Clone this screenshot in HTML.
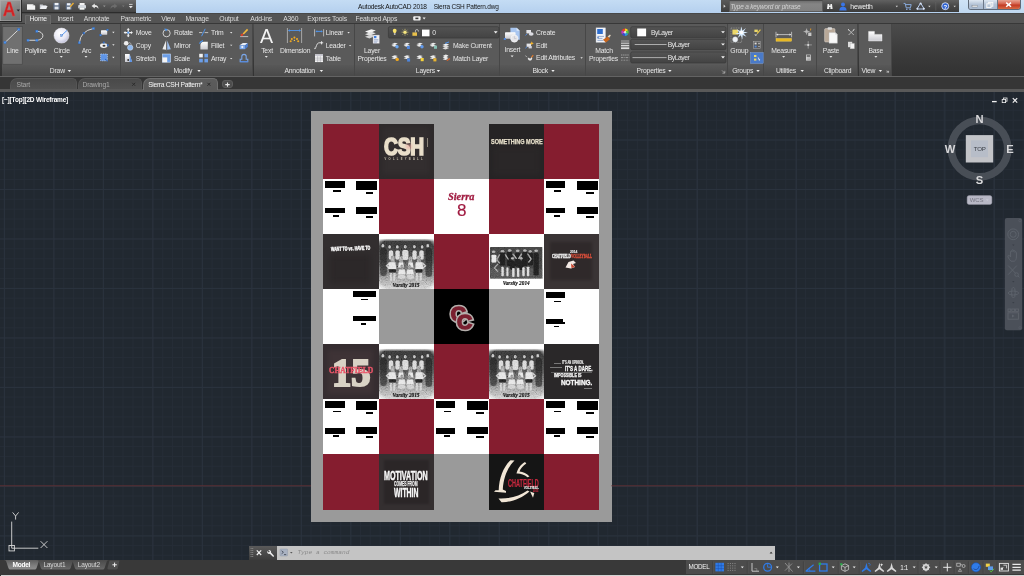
<!DOCTYPE html>
<html lang="en">
<head>
<meta charset="utf-8">
<title>Autodesk AutoCAD 2018 - Sierra CSH Pattern.dwg</title>
<style>
*{box-sizing:border-box;margin:0;padding:0}
html,body{width:1024px;height:576px;overflow:hidden;background:#212830}
body{font-family:"Liberation Sans",sans-serif;font-size:7px;color:#e6e6e6;position:relative}
#app{position:absolute;left:0;top:0;width:1024px;height:576px;overflow:hidden}
.abs{position:absolute}
.t{position:absolute;white-space:nowrap;line-height:8px;font-size:7px;color:#e4e4e4}
.c{text-align:center}
svg{position:absolute;overflow:visible}
/* ---------- title bar ---------- */
#titlebar{position:absolute;left:0;top:0;width:1024px;height:13px;background:linear-gradient(#c4dcf4,#b5d0ee)}
#qat{position:absolute;left:21.4px;top:0;width:114.2px;height:12.6px;background:linear-gradient(#6c6c6c,#555 45%,#454545);border-bottom:1px solid #2c2c2c}
#abtn{position:absolute;left:0;top:0;width:21.6px;height:21.6px;background:linear-gradient(160deg,#a2a2a2,#868686 45%,#6e6e6e);border:1px solid #2a2a2a;border-left:0;border-top:0;box-shadow:inset 0 0 0 .6px #b0b0b0}
#srch0{position:absolute;left:720.6px;top:0;width:8px;height:12.4px;background:linear-gradient(#5a5a5a,#3d3d3d)}
#search{position:absolute;left:728.5px;top:0;width:94.5px;height:12.4px;background:linear-gradient(#6e6e6e,#858585 30%,#808080);border:1px solid #5c5c5c;border-top-color:#4a4a4a}
#userbar{position:absolute;left:823px;top:0;width:136px;height:12.4px;background:linear-gradient(#616161,#4a4a4a 45%,#3c3c3c)}
#winbtns{position:absolute;left:959px;top:0;width:65px;height:13px;background:linear-gradient(#cfe3f6,#c0d8f0)}
#wb{position:absolute;left:9px;top:0;width:53.4px;height:9.6px;border:1px solid #5f6a78;border-top:0;border-radius:0 0 3px 3px;overflow:hidden;background:#c9d6e6}
#wb i{position:absolute;top:0;height:9px;display:block}
#wmin{left:0;width:14.5px;background:linear-gradient(#dfe8f2,#b4c3d6 50%,#a9bad0);border-right:1px solid #6d7888}
#wres{left:14.5px;width:14px;background:linear-gradient(#dfe8f2,#b4c3d6 50%,#a9bad0);border-right:1px solid #6d7888}
#wcls{left:28.5px;width:24px;background:linear-gradient(#e8a594,#d4604a 45%,#c13a24 55%,#d86a44)}
/* ---------- menu row ---------- */
#menurow{position:absolute;left:0;top:12.6px;width:1024px;height:11.4px;background:#545454;border-top:.8px solid #484848;border-bottom:.9px solid #383838}
#hometab{position:absolute;left:24.6px;top:1px;width:26.8px;height:10.4px;background:#5d5d5d;border:.6px solid #6a6a6a;border-bottom:0;border-radius:1px 1px 0 0}
/* ---------- ribbon ---------- */
#ribbon{position:absolute;left:0;top:24px;width:1024px;height:53px;background:linear-gradient(#4b4b4b,#3a3a3a 60%,#323232);border-bottom:1.2px solid #636363;height:52.9px}
.panel{position:absolute;top:0;height:51.7px;background:#5a5a5a;border-right:.8px solid #474747}
.panel .ttl{position:absolute;left:0;right:0;bottom:0;height:10.3px;background:linear-gradient(#585858,#494949)}
/* ---------- file tabs ---------- */
#filetabs{position:absolute;left:0;top:76.9px;width:1024px;height:15px;background:#363636;border-bottom:3.2px solid #595959}
.ftab{position:absolute;top:1.3px;height:10.6px;background:linear-gradient(#494949,#515151);border-radius:7px 5px 0 0;border:.5px solid #555;border-bottom:0}
.ftab.act{background:linear-gradient(#5c5c5c,#595959);border-color:#707070;height:11.6px}
#fplus{position:absolute;left:221.7px;top:3.4px;width:11.5px;height:8.2px;border-radius:3px;background:#4d4d4d;border:.5px solid #5c5c5c}
/* ---------- canvas ---------- */
#canvas{position:absolute;left:0;top:92px;width:1024px;height:468px;background-color:#212830;
background-image:
 linear-gradient(to right,#2a323d 1px,transparent 1px),
 linear-gradient(to bottom,#2a323d 1px,transparent 1px),
 linear-gradient(to right,#252c36 1px,transparent 1px),
 linear-gradient(to bottom,#252c36 1px,transparent 1px);
background-size:49.5px 49.5px,49.5px 49.5px,9.9px 9.9px,9.9px 9.9px;
background-position:3.9px 0,0 -2px,3.9px 0,0 -2px;overflow:hidden}
/* ---------- bottom ---------- */
#bottom{position:absolute;left:0;top:560px;width:1024px;height:16px;background:#393939}
#status{position:absolute;left:686px;top:0;width:338px;height:14px;background:#4c4c4c}
#botstrip{position:absolute;left:1px;top:14.6px;width:1023px;height:2px;background:#d4d4d4}
#cmd{position:absolute;left:249px;top:546px;width:526px;height:13.5px;background:#c4c4c4}
#cmdl{position:absolute;left:0;top:0;width:28px;height:13.5px;background:linear-gradient(#5a5a5a,#3c3c3c)}

.q{position:absolute;width:55.12px;height:55.12px;overflow:hidden}
.bk{position:absolute;background:#000;display:block}
.cap{font-family:"Liberation Serif",serif;font-style:italic;font-weight:bold;font-size:5.3px;line-height:6px;color:#111;letter-spacing:0;-webkit-text-stroke:.15px #111}
.im{font-weight:bold;color:#f6f6f6;transform:scaleX(.8);transform-origin:0 0;-webkit-text-stroke:.3px #f6f6f6}
.mo{font-weight:bold;color:#f8f8f8;transform:scaleX(.62);transform-origin:50% 0}
</style>
</head>
<body>
<div id="app">
<svg width="0" height="0" style="left:0;top:0">
<defs>
<filter id="b1" x="-10%" y="-10%" width="120%" height="120%"><feGaussianBlur stdDeviation="0.7"/></filter>
<filter id="b2" x="-20%" y="-20%" width="140%" height="140%"><feGaussianBlur stdDeviation="2.2"/></filter>
<filter id="b3" x="-10%" y="-10%" width="120%" height="120%"><feGaussianBlur stdDeviation="0.6"/></filter>
<filter id="nz" x="0" y="0" width="100%" height="100%"><feTurbulence type="fractalNoise" baseFrequency="0.8" numOctaves="3" seed="7"/><feColorMatrix type="matrix" values="0.6 0.6 0.6 0 -.4  0.6 0.6 0.6 0 -.4  0.6 0.6 0.6 0 -.4  0 0 0 0 1"/></filter>
<linearGradient id="pbg" x1="0" y1="0" x2="0" y2="1"><stop offset="0" stop-color="#2c2c2c"/><stop offset=".4" stop-color="#454545"/><stop offset=".7" stop-color="#7c7c7c"/><stop offset=".88" stop-color="#b4b4b4"/><stop offset="1" stop-color="#dcdcdc"/></linearGradient>
<linearGradient id="vt" x1="0" y1="0" x2="0" y2="1"><stop offset="0" stop-color="#fff" stop-opacity="1"/><stop offset=".55" stop-color="#fff" stop-opacity="1"/><stop offset="1" stop-color="#fff" stop-opacity="0"/></linearGradient>
<radialGradient id="vg2" cx="50%" cy="50%" r="74%"><stop offset="0" stop-color="#fff" stop-opacity="0"/><stop offset=".92" stop-color="#fff" stop-opacity="0"/><stop offset="1" stop-color="#fff" stop-opacity="1"/></radialGradient>
<radialGradient id="vg" cx="50%" cy="50%" r="74%"><stop offset="0" stop-color="#fff" stop-opacity="0"/><stop offset=".8" stop-color="#fff" stop-opacity="0"/><stop offset=".97" stop-color="#fff" stop-opacity="1"/></radialGradient>
<linearGradient id="vb" x1="0" y1="0" x2="0" y2="1"><stop offset="0" stop-color="#fff" stop-opacity="0"/><stop offset=".8" stop-color="#fff" stop-opacity="0"/><stop offset="1" stop-color="#fff" stop-opacity=".9"/></linearGradient>
<symbol id="team" viewBox="0 0 55 55">
 <rect x="0" y="0" width="55" height="55" fill="#fff"/>
 <g filter="url(#b3)">
  <rect x="-3" y="4.8" width="61" height="53" fill="url(#pbg)"/>
  <g fill="#1b1b1b" opacity=".6"><path d="M1.200 17c0-2.500 1.600-3.500 3.200-3.500s3.400 1 3.400 3.500v22c0 2-1 3-3.300 3s-3.300-1-3.300-3z"/><path d="M46.400 17c0-2.500 1.600-3.500 3.200-3.500s3.400 1 3.400 3.500v23c0 2-1 3-3.300 3s-3.300-1-3.300-3z"/></g>
  <g fill="#dcdcdc" opacity=".92">
   <rect x="9.8" y="16.5" width="4.4" height="9" rx="1.5"/><rect x="16.4" y="16.5" width="4.3" height="9" rx="1.5"/>
   <rect x="23.3" y="16" width="6" height="10" rx="1.8"/><rect x="33.5" y="16.5" width="4" height="9" rx="1.5"/>
   <rect x="40.3" y="16.5" width="4.3" height="9" rx="1.5"/>
  </g>
  <g fill="#2a2a2a" opacity=".7"><ellipse cx="10.600" cy="12.400" rx="2" ry="2.300"/><ellipse cx="18.300" cy="12.400" rx="2" ry="2.300"/><ellipse cx="26.200" cy="12.200" rx="2.100" ry="2.400"/><ellipse cx="35.300" cy="12.200" rx="2" ry="2.300"/><ellipse cx="43.100" cy="12.400" rx="2" ry="2.300"/></g><g fill="#b4b4b4"><ellipse cx="3.9" cy="11.8" rx="1.4" ry="1.7"/><ellipse cx="10.6" cy="12.9" rx="1.3" ry="1.6"/><ellipse cx="18.3" cy="12.9" rx="1.3" ry="1.6"/><ellipse cx="26.2" cy="12.7" rx="1.4" ry="1.7"/><ellipse cx="35.3" cy="12.7" rx="1.3" ry="1.6"/><ellipse cx="43.1" cy="12.9" rx="1.3" ry="1.6"/><ellipse cx="48.7" cy="11.8" rx="1.4" ry="1.7"/></g>
  <g fill="#8e8e8e"><rect x="11.8" y="21.5" width="3.8" height="8" rx="1.8"/><rect x="20.2" y="22" width="3.6" height="8" rx="1.8"/><rect x="29.6" y="22.5" width="3.6" height="8" rx="1.8"/><rect x="37.9" y="21.5" width="3.8" height="8" rx="1.8"/></g>
  <g fill="#e6e6e6" opacity=".95">
   <path d="M9.8 28.2 h6.6 l.8 6.800 h-8 z"/><path d="M6.600 31.600 l3.400 -3 l.8 1.400 l-2.400 1.800 l2.600 2 l-.8 1.200 z" opacity=".8"/>
   <path d="M36.800 28.200 h6.600 l.8 6.800 h-8 z"/><path d="M47.400 31.600 l-3.400 -3 l-.8 1.400 l2.400 1.800 l-2.600 2 l.8 1.200 z" opacity=".8"/>
   <path d="M19.800 28.500 h4.400 l.6 5 h-5.600 z"/><path d="M29.400 28.500 h4.400 l.6 5 h-5.600 z"/>
   <path d="M20 35.500 h5.600 l1 5 h-7.600 z"/><path d="M28.300 35.500 h5.600 l1 5 h-7.600 z"/>
  </g>
  <g fill="#7c7c7c"><ellipse cx="22.800" cy="33" rx="1.500" ry="2.500"/><ellipse cx="30.400" cy="33" rx="1.500" ry="2.500"/></g>
  <g fill="#242424"><rect x="10" y="35.200" width="7" height="3.200" rx="1"/><rect x="36.400" y="35.200" width="7" height="3.200" rx="1"/></g>
  <g fill="#c2c2c2"><rect x="10.800" y="39" width="2.400" height="8" rx="1"/><rect x="14.200" y="39" width="2.400" height="8" rx="1"/><rect x="36.800" y="39" width="2.400" height="8" rx="1"/><rect x="40.400" y="39" width="2.400" height="8" rx="1"/><ellipse cx="22.600" cy="42.800" rx="4" ry="2.200"/><ellipse cx="31.400" cy="42.800" rx="4" ry="2.200"/></g>
 </g>
 <rect x="0" y="5" width="55" height="50" fill="#808080" filter="url(#nz)" opacity=".55" style="mix-blend-mode:overlay"/>
 <rect x="0" y="4" width="55" height="51" fill="url(#vg)"/>
 <rect x="0" y="0" width="55" height="7.600" fill="url(#vt)"/>
</symbol>
<symbol id="team2" viewBox="0 0 55 50" preserveAspectRatio="none">
 <rect x="0" y="0" width="55" height="50" fill="#fff"/>
 <g filter="url(#b3)"><rect x="0" y="0" width="55" height="50" fill="#3a3a3a"/>
  <rect x="0" y="34" width="55" height="16" fill="#4a4a4a"/>
  <g fill="#1c1c1c"><rect x="10" y="9" width="6" height="20" rx="2"/><rect x="17.500" y="8" width="6" height="22" rx="2"/><rect x="26" y="9" width="6" height="22" rx="2"/><rect x="33.500" y="8" width="6" height="22" rx="2"/><rect x="39.500" y="9" width="5.500" height="20" rx="2"/><rect x="45.500" y="9" width="5.500" height="36" rx="2"/><rect x="21" y="22" width="5" height="14" rx="2"/><rect x="30" y="22" width="5" height="14" rx="2"/></g>
  <rect x="1.600" y="12" width="5" height="12.500" rx="1.500" fill="#e4e4e4"/>
  <g fill="#9c9c9c"><circle cx="3.800" cy="7.500" r="1.900"/><circle cx="13" cy="6.500" r="1.900"/><circle cx="20.500" cy="5.500" r="1.900"/><circle cx="29" cy="6" r="1.900"/><circle cx="36.500" cy="5.500" r="1.900"/><circle cx="42" cy="7" r="1.800"/><circle cx="48.300" cy="6" r="1.900"/><circle cx="23.500" cy="18" r="1.800"/><circle cx="32.500" cy="18" r="1.800"/></g>
  <g stroke="#8e8e8e" stroke-width="1.500" fill="none" stroke-linecap="round"><path d="M10 12l-3 8l3 5M16 12l3 7M24 11l3.500 7M33 11l-3 7M39.500 11l3.500 8l-2.500 5M8 27l-3.500 6l3.500 5"/></g>
  <g fill="#e2e2e2" opacity=".9"><rect x="12" y="31" width="2.400" height="15" rx="1"/><rect x="17.200" y="32" width="2" height="14" rx="1"/><rect x="23.200" y="33" width="2.400" height="14" rx="1"/><rect x="28.200" y="33" width="2.400" height="14" rx="1"/><rect x="33.800" y="32" width="2.400" height="14" rx="1"/><rect x="38.600" y="31" width="2.400" height="15" rx="1"/></g>
 </g>
 <rect x="0" y="0" width="55" height="50" fill="#808080" filter="url(#nz)" opacity=".5" style="mix-blend-mode:overlay"/>
 <rect x="0" y="0" width="55" height="50" fill="url(#vg2)"/>
</symbol>
</defs>
</svg>


<!-- TITLE BAR -->
<div id="titlebar">
  <div id="qat"></div>
  <div id="srch0"></div>
  <div id="search"></div>
  <div id="userbar"></div>
  <div id="winbtns"><div id="wb"><i id="wmin"></i><i id="wres"></i><i id="wcls"></i></div></div>
</div>
<div id="menurow"><div id="hometab"></div></div>
<div id="abtn"></div>

<!-- RIBBON -->
<div id="ribbon">
  <div class="panel" style="left:2px;width:118.6px"><div class="ttl"></div></div>
  <div class="panel" style="left:120.6px;width:132.9px"><div class="ttl"></div></div>
  <div class="panel" style="left:253.5px;width:101.5px"><div class="ttl"></div></div>
  <div class="panel" style="left:355px;width:144.8px"><div class="ttl"></div></div>
  <div class="panel" style="left:499.8px;width:86.4px"><div class="ttl"></div></div>
  <div class="panel" style="left:586.2px;width:142px"><div class="ttl"></div></div>
  <div class="panel" style="left:728.2px;width:35.9px"><div class="ttl"></div></div>
  <div class="panel" style="left:764.1px;width:52.7px"><div class="ttl"></div></div>
  <div class="panel" style="left:816.8px;width:41.7px"><div class="ttl"></div></div>
  <div class="panel" style="left:858.5px;width:33.1px"><div class="ttl"></div></div>
</div>

<!-- FILE TABS -->
<div id="filetabs">
  <div class="ftab" style="left:9.8px;width:67.1px"></div>
  <div class="ftab" style="left:77.6px;width:64px"></div>
  <div class="ftab act" style="left:142.8px;width:75.7px"></div>
  <div id="fplus"></div>
</div>

<!-- CANVAS -->
<div id="canvas">
<div id="quilt" class="abs" style="left:310.95px;top:19.1px;width:300.65px;height:410.7px;background:#9a9a9a"></div>
<div class="q" style="left:323.45px;top:31.86px;background:#851d2f;"></div>
<div class="q" style="left:378.54px;top:31.86px;background:#2e2a2b;"><div class="abs" style="left:4px;top:4px;width:46px;height:46px;background:#332e2f;filter:blur(2px)"></div><div class="t" style="left:5.2px;top:12.3px;font-size:23.5px;line-height:22px;font-weight:bold;color:#eadfca;letter-spacing:-.2px;transform:scaleX(.815);transform-origin:0 0;-webkit-text-stroke:1.7px #eadfca">CSH</div><div class="abs" style="left:27px;top:20px;width:6px;height:5px;background:#e9a9a0;opacity:.55;filter:blur(.8px)"></div><div class="t" style="left:6px;top:33.8px;font-size:2.6px;line-height:3px;letter-spacing:2.3px;font-weight:bold;color:#c9c0ae">VOLLEYBALL</div><div class="abs" style="left:48.6px;top:14px;width:.7px;height:9px;background:#8a8378"></div></div>
<div class="q" style="left:488.74px;top:31.86px;background:#252324;"><div class="abs" style="left:3px;top:22px;width:49px;height:30px;background:#2a2728;filter:blur(3px)"></div><div class="t" style="left:2.16px;top:14.51px;font-family:'Liberation Sans',sans-serif;font-weight:bold;font-style:normal;font-size:7px;line-height:7px;letter-spacing:0;color:#e7e0cb;-webkit-text-stroke:0.25px #e7e0cb;transform:rotate(0deg) scaleX(0.7913);transform-origin:0 100%;">SOMETHING MORE</div></div>
<div class="q" style="left:543.83px;top:31.86px;background:#851d2f;"></div>
<div class="q" style="left:323.45px;top:86.95px;background:#fff;"><i class="bk" style="left:2px;top:2px;width:19.5px;height:7px"></i><i class="bk" style="left:10px;top:11.5px;width:7.5px;height:1.6px"></i><i class="bk" style="left:2px;top:29px;width:19.5px;height:5.5px"></i><i class="bk" style="left:10px;top:36px;width:6px;height:1.6px"></i><i class="bk" style="left:33px;top:2px;width:21px;height:9px"></i><i class="bk" style="left:42.5px;top:13px;width:7.5px;height:1.8px"></i><i class="bk" style="left:33px;top:28px;width:21px;height:7px"></i><i class="bk" style="left:42.5px;top:37px;width:7.5px;height:1.8px"></i></div>
<div class="q" style="left:378.54px;top:86.95px;background:#851d2f;"></div>
<div class="q" style="left:433.64px;top:86.95px;background:#fff;"><div class="t" style="left:14.76px;top:11.90px;font-family:'Liberation Serif',serif;font-weight:bold;font-style:italic;font-size:10.8px;line-height:10.8px;letter-spacing:0;color:#a01a40;-webkit-text-stroke:0.3px #a01a40;transform:rotate(0deg) scaleX(0.9563);transform-origin:0 100%;">Sierra</div><div class="t" style="left:22.96px;top:23.05px;font-family:'Liberation Sans',sans-serif;font-weight:normal;font-style:normal;font-size:17px;line-height:17px;letter-spacing:0;color:#a01a40;-webkit-text-stroke:0.15px #a01a40;transform:rotate(0deg) scaleX(1.0048);transform-origin:0 100%;">8</div></div>
<div class="q" style="left:488.74px;top:86.95px;background:#851d2f;"></div>
<div class="q" style="left:543.83px;top:86.95px;background:#fff;"><i class="bk" style="left:2px;top:2px;width:19.5px;height:7px"></i><i class="bk" style="left:10px;top:11.5px;width:7.5px;height:1.6px"></i><i class="bk" style="left:2px;top:29px;width:19.5px;height:5.5px"></i><i class="bk" style="left:10px;top:36px;width:6px;height:1.6px"></i><i class="bk" style="left:33px;top:2px;width:21px;height:9px"></i><i class="bk" style="left:42.5px;top:13px;width:7.5px;height:1.8px"></i><i class="bk" style="left:33px;top:28px;width:21px;height:7px"></i><i class="bk" style="left:42.5px;top:37px;width:7.5px;height:1.8px"></i></div>
<div class="q" style="left:323.45px;top:142.05px;background:#322e2f;"><div class="abs" style="left:6px;top:20px;width:42px;height:30px;background:#2c2829;filter:blur(3px)"></div><div class="t" style="left:7.55px;top:13.12px;font-family:'Liberation Sans',sans-serif;font-weight:bold;font-style:normal;font-size:5.7px;line-height:5.7px;letter-spacing:0;color:#f6f6f6;-webkit-text-stroke:0.45px #f6f6f6;transform:rotate(-2deg) scaleX(0.6379);transform-origin:0 100%;">WANT TO vs. HAVE TO</div></div>
<div class="q" style="left:378.54px;top:142.05px;background:#fff;"><svg width="55.07" height="55.07" viewBox="0 0 55 55" style="left:0;top:0"><use href="#team"/></svg><div class="t c cap" style="left:0;width:55px;top:47.5px">Varsity 2015</div></div>
<div class="q" style="left:433.64px;top:142.05px;background:#851d2f;"></div>
<div class="q" style="left:488.74px;top:142.05px;background:#fff;"><svg width="52.6" height="31.8" viewBox="0 0 55 50" preserveAspectRatio="none" style="left:1.3px;top:12.5px"><use href="#team2"/></svg><div class="t c cap" style="left:0;width:55px;top:46px">Varsity 2014</div></div>
<div class="q" style="left:543.83px;top:142.05px;background:#3a3435;"><div class="abs" style="left:6px;top:8px;width:42px;height:38px;background:#2f292a;filter:blur(1.5px)"></div><div class="t" style="left:25.77px;top:16.98px;font-family:'Liberation Sans',sans-serif;font-weight:bold;font-style:normal;font-size:2.8px;line-height:2.8px;letter-spacing:0;color:#e8e8e8;-webkit-text-stroke:0.1px #e8e8e8;transform:rotate(0deg) scaleX(1.1880);transform-origin:0 100%;">2014</div><div class="t" style="left:7.97px;top:20.23px;font-family:'Liberation Serif',serif;font-weight:bold;font-style:normal;font-size:5.4px;line-height:5.4px;letter-spacing:0;color:#fbfbfb;-webkit-text-stroke:0.3px #fbfbfb;transform:rotate(0deg) scaleX(0.5930);transform-origin:0 100%;">CHATFIELD</div><div class="t" style="left:27.07px;top:20.23px;font-family:'Liberation Serif',serif;font-weight:bold;font-style:normal;font-size:5.4px;line-height:5.4px;letter-spacing:0;color:#e8523c;-webkit-text-stroke:0.3px #e8523c;transform:rotate(0deg) scaleX(0.5641);transform-origin:0 100%;">VOLLEYBALL</div><svg width="12" height="10" viewBox="0 0 12 10" style="left:21.600px;top:25.800px"><path d="M.5 7.500 L3.500 2 L8.500 .5 L11 3 L8 4 L10 7 L6 8.500 Z" fill="#f3e9e4"/><path d="M6 3.500 L10 6.800 L6.500 8.200 Z" fill="#c8452f"/></svg></div>
<div class="q" style="left:323.45px;top:197.14px;background:#fff;"><i class="bk" style="left:29.3px;top:2.3px;width:23.2px;height:5.2px"></i><i class="bk" style="left:37.3px;top:9.5px;width:7.3px;height:1.7px"></i><i class="bk" style="left:29.3px;top:27.3px;width:23.2px;height:4.5px"></i><i class="bk" style="left:37.3px;top:34px;width:5.2px;height:1.6px"></i></div>
<div class="q" style="left:433.64px;top:197.14px;background:#000;"><svg width="55" height="55" viewBox="0 0 55 55" style="left:0;top:0"><g font-family="Liberation Sans, sans-serif" font-weight="bold" font-size="21" text-anchor="middle" fill="#7a2030" stroke-linejoin="miter"><text x="24.3" y="31.6" stroke="#b4afac" stroke-width="4.6">C</text><text x="24.3" y="31.6" stroke="#7a2030" stroke-width="1.5">C</text><text x="30.5" y="39.8" stroke="#b4afac" stroke-width="4.6">C</text><text x="30.5" y="39.8" stroke="#7a2030" stroke-width="1.5">C</text></g></svg></div>
<div class="q" style="left:543.83px;top:197.14px;background:#fff;"><i class="bk" style="left:2px;top:2.5px;width:19px;height:6.2px"></i><i class="bk" style="left:10.4px;top:11.8px;width:7.1px;height:1.5px"></i><i class="bk" style="left:2px;top:29.5px;width:17px;height:5.3px"></i><i class="bk" style="left:2px;top:32.4px;width:19.4px;height:2.2px"></i><i class="bk" style="left:10.4px;top:36.4px;width:5px;height:1.5px"></i></div>
<div class="q" style="left:323.45px;top:252.24px;background:#352d30;"><div class="abs" style="left:5px;top:6px;width:45px;height:44px;background:#3e3336;filter:blur(2px)"></div><div class="t" style="left:8.55px;top:7.82px;font-family:'Liberation Serif',serif;font-weight:bold;font-style:normal;font-size:41px;line-height:41px;letter-spacing:0;color:#d9d2c5;-webkit-text-stroke:2.2px #d9d2c5;transform:rotate(0deg) scaleX(0.9415);transform-origin:0 100%;">15</div><div class="t" style="left:5.15px;top:22.16px;font-family:'Liberation Serif',serif;font-weight:bold;font-style:normal;font-size:9.2px;line-height:9.2px;letter-spacing:0;color:#ea5568;-webkit-text-stroke:0.45px #ea5568;transform:rotate(0deg) scaleX(0.8183);transform-origin:0 100%;">CHATFIELD</div></div>
<div class="q" style="left:378.54px;top:252.24px;background:#fff;"><svg width="55.07" height="55.07" viewBox="0 0 55 55" style="left:0;top:0"><use href="#team"/></svg><div class="t c cap" style="left:0;width:55px;top:47.5px">Varsity 2015</div></div>
<div class="q" style="left:433.64px;top:252.24px;background:#851d2f;"></div>
<div class="q" style="left:488.74px;top:252.24px;background:#fff;"><svg width="55.07" height="55.07" viewBox="0 0 55 55" style="left:0;top:0"><use href="#team"/></svg><div class="t c cap" style="left:0;width:55px;top:47.5px">Varsity 2015</div></div>
<div class="q" style="left:543.83px;top:252.24px;background:#2a2829;"><div class="t" style="left:18.17px;top:15.96px;font-family:'Liberation Sans',sans-serif;font-weight:bold;font-style:normal;font-size:5.2px;line-height:5.2px;letter-spacing:0;color:#e8e8e8;-webkit-text-stroke:0.2px #e8e8e8;transform:rotate(0deg) scaleX(0.5124);transform-origin:0 100%;">IT'S AN OPINION.</div><div class="t" style="left:21.37px;top:20.88px;font-family:'Liberation Sans',sans-serif;font-weight:bold;font-style:normal;font-size:7.3px;line-height:7.3px;letter-spacing:0;color:#f8f8f8;-webkit-text-stroke:0.35px #f8f8f8;transform:rotate(0deg) scaleX(0.6145);transform-origin:0 100%;">IT'S A DARE.</div><div class="t" style="left:10.17px;top:28.87px;font-family:'Liberation Sans',sans-serif;font-weight:bold;font-style:normal;font-size:5.3px;line-height:5.3px;letter-spacing:0;color:#f4f4f4;-webkit-text-stroke:0.3px #f4f4f4;transform:rotate(0deg) scaleX(0.6996);transform-origin:0 100%;">IMPOSSIBLE IS</div><div class="t" style="left:17.07px;top:34.33px;font-family:'Liberation Sans',sans-serif;font-weight:bold;font-style:normal;font-size:7.6px;line-height:7.6px;letter-spacing:0;color:#fafafa;-webkit-text-stroke:0.4px #fafafa;transform:rotate(0deg) scaleX(0.8424);transform-origin:0 100%;">NOTHING.</div><i class="abs" style="left:10px;top:18.5px;width:7px;height:.6px;background:#777"></i><i class="abs" style="left:6px;top:23px;width:12px;height:.6px;background:#777"></i><i class="abs" style="left:7px;top:27.4px;width:41px;height:.5px;background:#5e5e5e"></i><i class="abs" style="left:40px;top:43.5px;width:8px;height:.6px;background:#777"></i></div>
<div class="q" style="left:323.45px;top:307.34px;background:#fff;"><i class="bk" style="left:2px;top:2px;width:19.5px;height:7px"></i><i class="bk" style="left:10px;top:11.5px;width:7.5px;height:1.6px"></i><i class="bk" style="left:2px;top:29px;width:19.5px;height:5.5px"></i><i class="bk" style="left:10px;top:36px;width:6px;height:1.6px"></i><i class="bk" style="left:33px;top:2px;width:21px;height:9px"></i><i class="bk" style="left:42.5px;top:13px;width:7.5px;height:1.8px"></i><i class="bk" style="left:33px;top:28px;width:21px;height:7px"></i><i class="bk" style="left:42.5px;top:37px;width:7.5px;height:1.8px"></i></div>
<div class="q" style="left:378.54px;top:307.34px;background:#851d2f;"></div>
<div class="q" style="left:433.64px;top:307.34px;background:#fff;"><i class="bk" style="left:2px;top:2px;width:19.5px;height:7px"></i><i class="bk" style="left:10px;top:11.5px;width:7.5px;height:1.6px"></i><i class="bk" style="left:2px;top:29px;width:19.5px;height:5.5px"></i><i class="bk" style="left:10px;top:36px;width:6px;height:1.6px"></i><i class="bk" style="left:33px;top:2px;width:21px;height:9px"></i><i class="bk" style="left:42.5px;top:13px;width:7.5px;height:1.8px"></i><i class="bk" style="left:33px;top:28px;width:21px;height:7px"></i><i class="bk" style="left:42.5px;top:37px;width:7.5px;height:1.8px"></i></div>
<div class="q" style="left:488.74px;top:307.34px;background:#851d2f;"></div>
<div class="q" style="left:543.83px;top:307.34px;background:#fff;"><i class="bk" style="left:2px;top:2px;width:19.5px;height:7px"></i><i class="bk" style="left:10px;top:11.5px;width:7.5px;height:1.6px"></i><i class="bk" style="left:2px;top:29px;width:19.5px;height:5.5px"></i><i class="bk" style="left:10px;top:36px;width:6px;height:1.6px"></i><i class="bk" style="left:33px;top:2px;width:21px;height:9px"></i><i class="bk" style="left:42.5px;top:13px;width:7.5px;height:1.8px"></i><i class="bk" style="left:33px;top:28px;width:21px;height:7px"></i><i class="bk" style="left:42.5px;top:37px;width:7.5px;height:1.8px"></i></div>
<div class="q" style="left:323.45px;top:362.43px;background:#851d2f;"></div>
<div class="q" style="left:378.54px;top:362.43px;background:#342f30;"><div class="abs" style="left:5px;top:6px;width:45px;height:44px;background:#2b2627;filter:blur(1px)"></div><div class="t" style="left:5.76px;top:14.86px;font-family:'Liberation Sans',sans-serif;font-weight:bold;font-style:normal;font-size:13.6px;line-height:13.6px;letter-spacing:0;color:#f8f8f8;-webkit-text-stroke:0.5px #f8f8f8;transform:rotate(0deg) scaleX(0.5255);transform-origin:0 100%;">MOTIVATION</div><div class="t" style="left:15.66px;top:26.87px;font-family:'Liberation Sans',sans-serif;font-weight:bold;font-style:normal;font-size:6.5px;line-height:6.5px;letter-spacing:0;color:#f0f0f0;-webkit-text-stroke:0.25px #f0f0f0;transform:rotate(0deg) scaleX(0.5271);transform-origin:0 100%;">COMES FROM</div><div class="t" style="left:15.06px;top:31.14px;font-family:'Liberation Sans',sans-serif;font-weight:bold;font-style:normal;font-size:13.5px;line-height:13.5px;letter-spacing:0;color:#f8f8f8;-webkit-text-stroke:0.5px #f8f8f8;transform:rotate(0deg) scaleX(0.5085);transform-origin:0 100%;">WITHIN</div></div>
<div class="q" style="left:488.74px;top:362.43px;background:#151515;"><svg width="55" height="55" viewBox="0 0 55 55" style="left:0;top:0"><g fill="#f1e6d6"><path d="M21.5 6.2 L25.5 6.6 C19 13 14.5 23 13.8 35.5 L17 37 L17 38.8 L5 37.8 L6.5 36.2 L9.7 36.3 C10 24 14.5 12.5 21.5 6.2 Z"/><path d="M36 8 L37.3 9.5 C34 11.5 31.5 14.5 30.5 17.5 C34 17.8 38 19.5 40.5 22.5 L38.5 23.2 C35 20.5 31 19.3 27.5 19.6 C28.5 15 31.5 10.5 36 8 Z"/><path d="M9.5 44.5 C20 45 30 42.5 38.5 36.5 L40.5 37.5 C32 45 21 48.5 12.5 48.2 Z"/><path d="M41 37.5 L45.3 39 L44 43.8 Z"/></g></svg><div class="t" style="left:19.46px;top:23.20px;font-family:'Liberation Sans',sans-serif;font-weight:bold;font-style:normal;font-size:10.6px;line-height:10.6px;letter-spacing:0;color:#c9283f;-webkit-text-stroke:0.2px #c9283f;transform:rotate(0deg) scaleX(0.5196);transform-origin:0 100%;">CHATFIELD</div><div class="t" style="left:35.06px;top:32.49px;font-family:'Liberation Sans',sans-serif;font-weight:bold;font-style:normal;font-size:3.4px;line-height:3.4px;letter-spacing:0;color:#eeeeee;-webkit-text-stroke:0.1px #eeeeee;transform:rotate(0deg) scaleX(0.6530);transform-origin:0 100%;">VOLLEYBALL</div><div class="t" style="left:44.47px;top:35.92px;font-family:'Liberation Sans',sans-serif;font-weight:bold;font-style:normal;font-size:3.6px;line-height:3.6px;letter-spacing:0;color:#c9283f;-webkit-text-stroke:0.1px #c9283f;transform:rotate(0deg) scaleX(0.6743);transform-origin:0 100%;">2015</div></div>
<div class="q" style="left:543.83px;top:362.43px;background:#851d2f;"></div>
</div>

<!-- COMMAND LINE -->
<div id="cmd"><div id="cmdl"></div>
  <div class="t" style="left:48.4px;top:2.7px;font-family:'Liberation Mono',monospace;font-style:italic;color:#8a8a8a;font-size:6.2px;letter-spacing:0">Type a command</div>
</div>

<!-- BOTTOM -->
<div id="bottom">
  <div id="status"></div>
  <div id="botstrip"></div>
</div>
<svg id="rib" width="1024" height="576" viewBox="0 0 1024 576" style="left:0;top:0;font-family:'Liberation Sans',sans-serif;font-size:6.8px;letter-spacing:-.2px" fill="#e6e6e6">
<defs><linearGradient id="gdd" x1="0" y1="0" x2="0" y2="1"><stop offset="0" stop-color="#535353"/><stop offset="1" stop-color="#434343"/></linearGradient></defs>
<text x="49.8" y="73.2" text-anchor="start" >Draw</text>
<path d="M67.70 70.00h3.4l-1.70 2z" fill="#f0f0f0"/>
<text x="173.4" y="73.2" text-anchor="start" >Modify</text>
<path d="M197.30 70.00h3.4l-1.70 2z" fill="#f0f0f0"/>
<text x="284.4" y="73.2" text-anchor="start" >Annotation</text>
<path d="M319.70 70.00h3.4l-1.70 2z" fill="#f0f0f0"/>
<text x="415.8" y="73.2" text-anchor="start" >Layers</text>
<path d="M436.70 70.00h3.4l-1.70 2z" fill="#f0f0f0"/>
<text x="532.4" y="73.2" text-anchor="start" >Block</text>
<path d="M551.30 70.00h3.4l-1.70 2z" fill="#f0f0f0"/>
<text x="636.6" y="73.2" text-anchor="start" >Properties</text>
<path d="M668.20 70.00h3.4l-1.70 2z" fill="#f0f0f0"/>
<text x="732.2" y="73.2" text-anchor="start" >Groups</text>
<path d="M756.30 70.00h3.4l-1.70 2z" fill="#f0f0f0"/>
<text x="775.9" y="73.2" text-anchor="start" >Utilities</text>
<path d="M800.50 70.00h3.4l-1.70 2z" fill="#f0f0f0"/>
<text x="824" y="73.2" text-anchor="start" >Clipboard</text>
<text x="861.5" y="73.2" text-anchor="start" >View</text>
<path d="M878.70 70.00h3.4l-1.70 2z" fill="#f0f0f0"/>
<rect x="2.8" y="26.6" width="19.4" height="37.6" fill="#707070" stroke="#454545" stroke-width=".6"/>
<text x="12.6" y="52.8" text-anchor="middle" >Line</text>
<text x="35.5" y="52.8" text-anchor="middle" >Polyline</text>
<text x="61.8" y="52.8" text-anchor="middle" >Circle</text>
<text x="86.5" y="52.8" text-anchor="middle" >Arc</text>
<path d="M59.80 55.95h3l-1.50 1.7z" fill="#e6e6e6"/>
<path d="M84.50 55.95h3l-1.50 1.7z" fill="#e6e6e6"/>
<path d="M112.20 31.80h2.4l-1.20 1.4z" fill="#e6e6e6"/>
<path d="M112.20 44.30h2.4l-1.20 1.4z" fill="#e6e6e6"/>
<path d="M112.20 56.80h2.4l-1.20 1.4z" fill="#e6e6e6"/>
<text x="135.8" y="35.0" text-anchor="start" >Move</text>
<text x="174" y="35.0" text-anchor="start" >Rotate</text>
<text x="211" y="35.0" text-anchor="start" >Trim</text>
<path d="M230.00 32.00h2.4l-1.20 1.4z" fill="#e6e6e6"/>
<text x="135.8" y="47.7" text-anchor="start" >Copy</text>
<text x="174" y="47.7" text-anchor="start" >Mirror</text>
<text x="211" y="47.7" text-anchor="start" >Fillet</text>
<path d="M230.00 44.70h2.4l-1.20 1.4z" fill="#e6e6e6"/>
<text x="135.8" y="60.9" text-anchor="start" >Stretch</text>
<text x="174" y="60.9" text-anchor="start" >Scale</text>
<text x="211" y="60.9" text-anchor="start" >Array</text>
<path d="M230.00 57.90h2.4l-1.20 1.4z" fill="#e6e6e6"/>
<text x="266.6" y="43.1" text-anchor="middle" font-size="19.6" letter-spacing="0" fill="#f2f2f2">A</text>
<text x="267" y="52.8" text-anchor="middle" >Text</text>
<path d="M264.80 55.95h3l-1.50 1.7z" fill="#e6e6e6"/>
<text x="295.1" y="52.8" text-anchor="middle" >Dimension</text>
<text x="325.7" y="35.1" text-anchor="start" >Linear</text>
<path d="M347.40 32.10h2.4l-1.20 1.4z" fill="#e6e6e6"/>
<text x="325.7" y="47.9" text-anchor="start" >Leader</text>
<path d="M348.90 44.90h2.4l-1.20 1.4z" fill="#e6e6e6"/>
<text x="325.7" y="60.5" text-anchor="start" >Table</text>
<text x="372" y="53.4" text-anchor="middle" >Layer</text>
<text x="372" y="60.8" text-anchor="middle" >Properties</text>
<rect x="388.4" y="26.7" width="110.6" height="11.4" rx="1.5" fill="url(#gdd)" stroke="#363636" stroke-width=".6"/>
<rect x="422" y="29.6" width="7.5" height="6.7" fill="#fff"/>
<text x="432.2" y="35.3" text-anchor="start" >0</text>
<path d="M493.80 31.30h3.8l-1.90 2.2z" fill="#f4f4f4"/>
<text x="452.9" y="47.9" text-anchor="start" >Make Current</text>
<text x="452.9" y="60.6" text-anchor="start" >Match Layer</text>
<text x="512.4" y="52.4" text-anchor="middle" >Insert</text>
<path d="M510.60 55.55h3l-1.50 1.7z" fill="#e6e6e6"/>
<text x="536.1" y="35" text-anchor="start" >Create</text>
<text x="536.1" y="47.7" text-anchor="start" >Edit</text>
<text x="536.1" y="60.4" text-anchor="start" >Edit Attributes</text>
<path d="M580.40 57.30h2.4l-1.20 1.4z" fill="#e6e6e6"/>
<text x="604.1" y="53.4" text-anchor="middle" >Match</text>
<text x="603.5" y="60.8" text-anchor="middle" >Properties</text>
<rect x="630.7" y="26.7" width="95.3" height="11.1" rx="1.5" fill="url(#gdd)" stroke="#363636" stroke-width=".6"/>
<path d="M721.10 31.15h3.8l-1.90 2.2z" fill="#f4f4f4"/>
<rect x="630.7" y="39.3" width="95.3" height="10.4" rx="1.5" fill="url(#gdd)" stroke="#363636" stroke-width=".6"/>
<path d="M721.10 43.40h3.8l-1.90 2.2z" fill="#f4f4f4"/>
<rect x="630.7" y="51.9" width="95.3" height="11.1" rx="1.5" fill="url(#gdd)" stroke="#363636" stroke-width=".6"/>
<path d="M721.10 56.35h3.8l-1.90 2.2z" fill="#f4f4f4"/>
<rect x="637.2" y="28.5" width="8.9" height="7.8" fill="#fff"/>
<text x="651" y="34.9" text-anchor="start" letter-spacing="-.5">ByLayer</text>
<text x="667.8" y="47.2" text-anchor="start" letter-spacing="-.5">ByLayer</text>
<text x="667.8" y="60.1" text-anchor="start" letter-spacing="-.5">ByLayer</text>
<path d="M634.7 44.5H666.6M632.5 57.6H666.6" stroke="#d8d8d8" stroke-width=".7"/>
<text x="739.3" y="52.7" text-anchor="middle" >Group</text>
<rect x="750.6" y="52.7" width="12.6" height="10.6" fill="#4a7ac8" stroke="#7fa6e6" stroke-width=".5"/>
<text x="783.8" y="52.7" text-anchor="middle" >Measure</text>
<path d="M782.10 55.95h3l-1.50 1.7z" fill="#e6e6e6"/>
<text x="831" y="52.7" text-anchor="middle" >Paste</text>
<path d="M829.40 55.95h3l-1.50 1.7z" fill="#e6e6e6"/>
<text x="875.8" y="52.7" text-anchor="middle" >Base</text>
<path d="M874.40 55.95h3l-1.50 1.7z" fill="#e6e6e6"/>
<text x="887.6" y="73" text-anchor="middle" font-size="5.5">»</text>
<text x="358.1" y="9" text-anchor="start" fill="#141414" font-size="6.6">Autodesk AutoCAD 2018</text>
<text x="433.7" y="9" text-anchor="start" fill="#141414" font-size="6.5">Sierra CSH Pattern.dwg</text>
<text x="730.5" y="8.8" text-anchor="start" fill="#d2d2d2" font-style="italic" font-size="6.5">Type a keyword or phrase</text>
<text x="850.3" y="8.8" text-anchor="start" fill="#f2f2f2" font-size="6.8">hewetth</text>
<text x="29.6" y="20.6" text-anchor="start" fill="#f4f4f4">Home</text>
<text x="57.4" y="20.6" text-anchor="start" fill="#dadada">Insert</text>
<text x="83.8" y="20.6" text-anchor="start" fill="#dadada">Annotate</text>
<text x="120.4" y="20.6" text-anchor="start" fill="#dadada">Parametric</text>
<text x="161.2" y="20.6" text-anchor="start" fill="#dadada">View</text>
<text x="185.4" y="20.6" text-anchor="start" fill="#dadada">Manage</text>
<text x="219.3" y="20.6" text-anchor="start" fill="#dadada">Output</text>
<text x="250.3" y="20.6" text-anchor="start" fill="#dadada">Add-ins</text>
<text x="283.2" y="20.6" text-anchor="start" fill="#dadada">A360</text>
<text x="307.3" y="20.6" text-anchor="start" fill="#dadada">Express Tools</text>
<text x="355.5" y="20.6" text-anchor="start" fill="#dadada">Featured Apps</text>
<text x="16.6" y="86.9" text-anchor="start" fill="#a8a8a8">Start</text>
<text x="82.5" y="86.9" text-anchor="start" fill="#a8a8a8">Drawing1</text>
<text x="148.2" y="86.9" text-anchor="start" fill="#f4f4f4" letter-spacing="-.35">Sierra CSH Pattern*</text>
<path d="M132.2 82.8l3 3m0-3l-3 3M207.4 82.8l3 3m0-3l-3 3" stroke="#2c2c2c" stroke-width="1"/>
<path d="M225.3 84.6h4.4m-2.2-2.2v4.4" stroke="#e8e8e8" stroke-width="1.1"/>
<text x="2" y="101.7" text-anchor="start" fill="#fff" font-weight="bold" font-size="6.5" letter-spacing="-.18">[−][Top][2D Wireframe]</text>
<defs><radialGradient id="gcir" cx="40%" cy="35%" r="70%"><stop offset="0" stop-color="#fff"/><stop offset=".6" stop-color="#e8e8f4"/><stop offset="1" stop-color="#bcbcd6"/></radialGradient><linearGradient id="gw" x1="0" y1="0" x2="0" y2="1"><stop offset="0" stop-color="#fff"/><stop offset="1" stop-color="#c9c9cf"/></linearGradient><linearGradient id="gb" x1="0" y1="0" x2="0" y2="1"><stop offset="0" stop-color="#9cc3f5"/><stop offset="1" stop-color="#4a86dc"/></linearGradient></defs>
<path d="M5 42.5L18.75 29.4" stroke="#d6d6d6" stroke-width="1"/>
<rect x="3.90" y="41.40" width="2.2" height="2.2" fill="#4f94ea" stroke="#2f63b5" stroke-width=".35"/>
<rect x="17.65" y="28.30" width="2.2" height="2.2" fill="#4f94ea" stroke="#2f63b5" stroke-width=".35"/>
<path d="M28 40.25H36.9A6 4.5 0 0 0 36.9 31.25" stroke="#d6d6d6" stroke-width="1" fill="none"/>
<rect x="26.90" y="39.15" width="2.2" height="2.2" fill="#4f94ea" stroke="#2f63b5" stroke-width=".35"/>
<rect x="35.80" y="39.15" width="2.2" height="2.2" fill="#4f94ea" stroke="#2f63b5" stroke-width=".35"/>
<rect x="35.80" y="30.15" width="2.2" height="2.2" fill="#4f94ea" stroke="#2f63b5" stroke-width=".35"/>
<circle cx="61.5" cy="35.6" r="7.5" fill="url(#gcir)" stroke="#f4f4f8" stroke-width=".5"/><path d="M61.5 35.6L67.2 30.2" stroke="#5a9af0" stroke-width="1"/>
<rect x="60.70" y="34.80" width="1.6" height="1.6" fill="#7db3f5" stroke="#2f63b5" stroke-width=".35"/>
<path d="M79.4 42.75Q80.5 31 93.5 28.5" stroke="#d6d6d6" stroke-width="1" fill="none"/>
<rect x="78.30" y="41.65" width="2.2" height="2.2" fill="#4f94ea" stroke="#2f63b5" stroke-width=".35"/>
<rect x="83.00" y="32.30" width="1.8" height="1.8" fill="#4f94ea" stroke="#2f63b5" stroke-width=".35"/>
<rect x="92.40" y="27.40" width="2.2" height="2.2" fill="#4f94ea" stroke="#2f63b5" stroke-width=".35"/>
<rect x="101" y="30.2" width="6.2" height="4.6" rx=".6" fill="url(#gw)"/>
<rect x="99.80" y="34.40" width="1.6" height="1.6" fill="#4f94ea" stroke="#2f63b5" stroke-width=".35"/>
<rect x="106.70" y="29.10" width="1.6" height="1.6" fill="#4f94ea" stroke="#2f63b5" stroke-width=".35"/>
<ellipse cx="103.8" cy="45.6" rx="3.8" ry="2.4" fill="#f2f2f2"/><ellipse cx="104" cy="45.8" rx="1.5" ry="1" fill="#3a3a3a"/>
<rect x="103.05" y="41.85" width="1.5" height="1.5" fill="#4f94ea" stroke="#2f63b5" stroke-width=".35"/>
<rect x="107.05" y="44.65" width="1.5" height="1.5" fill="#4f94ea" stroke="#2f63b5" stroke-width=".35"/>
<rect x="100.6" y="54" width="6.8" height="6.8" fill="#5f95e6" stroke="#b9d2f5" stroke-width=".7" stroke-dasharray="1.4 .8"/>
<path d="M105 59l3 2.4" stroke="#2e62b8" stroke-width="1"/>
<g transform="translate(128.25 32.6)"><path d="M0-4.6l1.6 1.8h-1v2.2h2.2v-1l1.8 1.6-1.8 1.6v-1h-2.2v2.2h1l-1.6 1.8-1.6-1.8h1v-2.2h-2.2v1l-1.8-1.6 1.8-1.6v1h2.2v-2.2h-1z" fill="#f2f2f2"/><rect x="-1" y="-1" width="2" height="2" fill="#4f94ea"/></g>
<circle cx="126.2" cy="43.2" r="2.3" fill="#ededed"/><circle cx="130.2" cy="47.6" r="2.7" fill="#8fb8ee" stroke="#d5e4f8" stroke-width=".5"/><path d="M128.8 42.4a3 3 0 0 1 2.6 2.2" stroke="#ccc" stroke-width=".6" fill="none"/>
<path d="M125 54h4.6l2.4 8h-7z" fill="url(#gw)"/><path d="M129.6 54l2.6 8h-2.6z" fill="#5f95e6"/><rect x="127.4" y="59.2" width="1.6" height="1.6" fill="#222"/>
<circle cx="166.6" cy="33.2" r="3.6" fill="none" stroke="#cfcfcf" stroke-width="1"/><path d="M164.2 28.6l3.4.4-1.6 2.4z" fill="#4f94ea"/>
<path d="M166 40.6v9.2l-3.6-.6z" fill="#ececec"/><path d="M167.2 40.6v9.2l3.6-.6z" fill="#9dbfee"/><path d="M166.6 40v10.6" stroke="#888" stroke-width=".5"/>
<rect x="162.4" y="54" width="8.2" height="8.2" fill="#6b9ee8" stroke="#c6daf6" stroke-width=".6"/><rect x="162.4" y="57.4" width="4.8" height="4.8" fill="#f4f4f4"/>
<path d="M199 32.6h3.4M204.6 32.6h3.6" stroke="#d8d8d8" stroke-width=".8"/><path d="M201.6 36.2l3.6-7.4" stroke="#4f94ea" stroke-width="1"/>
<path d="M200.4 49.6v-4.2a3.6 3.6 0 0 1 3.6-3.6h3.8v7.8z" fill="url(#gw)"/><path d="M199.4 43.6a5 5 0 0 1 3.6-3" stroke="#4f94ea" stroke-width="1.1" fill="none"/>
<rect x="199.2" y="53.8" width="3.6" height="3.6" fill="#f0f0f0"/><rect x="204.4" y="53.8" width="3.6" height="3.6" fill="#6b9ee8"/><rect x="199.2" y="58.8" width="3.6" height="3.6" fill="#6b9ee8"/><rect x="204.4" y="58.8" width="3.6" height="3.6" fill="#6b9ee8"/>
<path d="M240.2 36.6h8" stroke="#e8e8e8" stroke-width=".7"/><path d="M242.6 33.4l4.4-4.6 1.2 1.2-4.4 4.6z" fill="#f0b83c"/><path d="M241.2 35.8l1.4-2.4 1.2 1.2z" fill="#d8442a"/><circle cx="241.8" cy="35" r="1.2" fill="#d8442a"/>
<path d="M239.6 45.2l3.2-2.2h5l-2.6 2.2z" fill="#e8eef8"/><rect x="239.6" y="45.2" width="5.6" height="4" fill="#7aa7ea"/><path d="M245.2 45.2l2.6-2.2v3.8l-2.6 2.4z" fill="#4a7fd4"/><rect x="241.4" y="45.9" width="1.8" height="2.2" fill="#e8eef8"/>
<path d="M240.2 61.6v-2.4h1.6v-2.6a2.2 2.2 0 0 1 4.4 0v2.6h1.6v2.4z" fill="none" stroke="#7aa7ea" stroke-width="1.1"/><path d="M240.4 61.8h7.4" stroke="#4a7fd4" stroke-width="1"/>
<path d="M287.4 28V43M301.6 28V43" stroke="#c8c8c8" stroke-width=".7"/><path d="M288.6 30.5H300.4" stroke="#4f94ea" stroke-width=".9"/><path d="M288 30.5l2-1.3v2.6zM301 30.5l-2-1.3v2.6z" fill="#4f94ea"/>
<circle cx="290.7" cy="41.2" r="1.05" fill="#f0a820"/>
<circle cx="291.8" cy="39" r="1.05" fill="#f0a820"/>
<circle cx="294.4" cy="37.6" r="1.05" fill="#f0a820"/>
<circle cx="297" cy="39" r="1.05" fill="#f0a820"/>
<circle cx="298.2" cy="41.2" r="1.05" fill="#f0a820"/>
<circle cx="294.4" cy="40.4" r=".7" fill="#f6c83c"/>
<path d="M314.6 29.2v7.2M323.6 29.2v7.2" stroke="#bdbdbd" stroke-width=".9"/><path d="M316 31.4h6.2" stroke="#4f94ea" stroke-width="1"/><path d="M315.4 31.4l1.8-1.2v2.4zM322.8 31.4l-1.8-1.2v2.4z" fill="#4f94ea"/>
<path d="M314.8 48.6c1.6-.6 1.6-5.6 4-5.8h1.4" stroke="#e4e4e4" stroke-width=".9" fill="none"/><path d="M314.4 49.2l.4-1.8 1.2 1z" fill="#e4e4e4"/><path d="M321.6 41.2v3.2M320 42.8h3.2" stroke="#f4f4f4" stroke-width=".9"/>
<rect x="315" y="54.4" width="8" height="7.7" fill="#f2f2f2"/><rect x="315" y="54.4" width="8" height="1.7" fill="#c9c9d2"/><path d="M317.7 56.1v6M320.3 56.1v6M315 58.1h8M315 60.1h8" stroke="#8c8c96" stroke-width=".4"/>
<g><path d="M365 31.6l6.4-2.4 4.4 1.4-6.4 2.6z" fill="#f4f4f4"/><path d="M365 34.2l6.4-2.4 4.4 1.4-6.4 2.6z" fill="#e2e2e2"/><path d="M365 36.8l6.4-2.4 4.4 1.4-6.4 2.6z" fill="#d4d4d4"/><rect x="373" y="35" width="6.4" height="8.4" fill="#f0f0f4" stroke="#9a9aa6" stroke-width=".4"/><rect x="374" y="36" width="2.4" height="2.2" fill="#3f7fe0"/><path d="M374 39.6h4.4M374 41h4.4M374 42.2h3" stroke="#6a86b8" stroke-width=".5"/></g>
<path d="M393 31.4a1.9 1.9 0 1 1 3.4 0l-.8 1.6h-1.8z" fill="#f8e26a"/><rect x="393.9" y="33.2" width="1.6" height="1.6" fill="#cfcfcf"/>
<circle cx="405" cy="32.2" r="1.7" fill="#f6e680"/><path d="M405 28.8v1.2M405 34.4v1.2M401.6 32.2h1.2M407.2 32.2h1.2M402.6 29.8l.9.9M406.5 33.7l.9.9M407.4 29.8l-.9.9M403.5 33.7l-.9.9" stroke="#f6e680" stroke-width=".6"/>
<rect x="412.4" y="32.4" width="4.6" height="3.4" fill="#e8c04a"/><path d="M415.4 32.4v-1.4a1.5 1.5 0 0 1 3 0v.6" stroke="#d8d8d8" stroke-width=".7" fill="none"/>
<path d="M391.4 44.2l3.4-1.4 3 .8-3.4 1.5zM391.4 45.800000000000004l3.4-1.4 3 .8-3.4 1.5z" fill="#ededed"/>
<circle cx="397" cy="46.800000000000004" r="1.7" fill="#6aa6f2"/>
<path d="M403.59999999999997 44.2l3.4-1.4 3 .8-3.4 1.5zM403.59999999999997 45.800000000000004l3.4-1.4 3 .8-3.4 1.5z" fill="#ededed"/>
<rect x="406.9" y="45.800000000000004" width="3" height="3.2" fill="#4f86dc"/>
<path d="M416.4 44.2l3.4-1.4 3 .8-3.4 1.5zM416.4 45.800000000000004l3.4-1.4 3 .8-3.4 1.5z" fill="#ededed"/>
<circle cx="422" cy="46.800000000000004" r="1.7" fill="#5f98ea"/>
<path d="M429.7 44.2l3.4-1.4 3 .8-3.4 1.5zM429.7 45.800000000000004l3.4-1.4 3 .8-3.4 1.5z" fill="#ededed"/>
<rect x="434.0" y="45.6" width="3" height="3.2" fill="#86c0b4"/>
<g><path d="M442.4 45l3.6-1.6 3.2 1-3.6 1.6z" fill="#f2f2f2"/><path d="M442.4 46.8l3.6-1.6 3.2 1-3.6 1.6zM442.4 48.6l3.6-1.6 3.2 1-3.6 1.6z" fill="#dcdcdc"/><path d="M445 43.4l4-1.4" stroke="#4f94ea" stroke-width="1"/></g>
<path d="M391.4 56.6l3.4-1.4 3 .8-3.4 1.5zM391.4 58.2l3.4-1.4 3 .8-3.4 1.5z" fill="#ededed"/>
<circle cx="397.2" cy="59.4" r="1.7" fill="#f0a820"/>
<path d="M403.59999999999997 56.6l3.4-1.4 3 .8-3.4 1.5zM403.59999999999997 58.2l3.4-1.4 3 .8-3.4 1.5z" fill="#ededed"/>
<rect x="407.09999999999997" y="58.4" width="3" height="3.2" fill="#4f86dc"/>
<path d="M416.4 56.6l3.4-1.4 3 .8-3.4 1.5zM416.4 58.2l3.4-1.4 3 .8-3.4 1.5z" fill="#ededed"/>
<rect x="420.7" y="58.0" width="3" height="3.2" fill="#f4d23c"/>
<path d="M429.7 56.6l3.4-1.4 3 .8-3.4 1.5zM429.7 58.2l3.4-1.4 3 .8-3.4 1.5z" fill="#ededed"/>
<rect x="433.40000000000003" y="58.2" width="3" height="3.2" fill="#e8b430"/>
<g><path d="M442.6 56l3.2-1.4 2.8.9-3.2 1.4zM442.6 57.6l3.2-1.4 2.8.9-3.2 1.4zM442.6 59.2l3.2-1.4 2.8.9-3.2 1.4z" fill="#ececec"/><path d="M446.4 60.4l3-2.4 1 1-3 2z" fill="#d8642a"/></g>
<g><path d="M510.4 27.8h6.2l3.2 3v9h-9.4z" fill="#a9c6f0"/><path d="M516.6 27.8v3h3.2z" fill="#dce8f8"/><rect x="505" y="32.2" width="10.6" height="6.6" rx=".8" fill="url(#gw)"/><circle cx="514.4" cy="38.6" r="3.6" fill="#e6e6ea" stroke="#fff" stroke-width=".5"/><path d="M514.4 36.2v2.4h2" stroke="#b8b8c2" stroke-width=".6" fill="none"/><rect x="503.8" y="38" width="2" height="2" fill="#4f86dc"/></g>
<rect x="526.4" y="30" width="4.6" height="3.4" fill="#e4e4e8"/><ellipse cx="531.2" cy="34" rx="2.4" ry="1.8" fill="#dcdce2"/><path d="M525.4 35.4l1.6-1.4" stroke="#4f86dc" stroke-width="1"/>
<rect x="526.6" y="43.6" width="4.4" height="3.2" fill="#e4e4e8"/><rect x="528.6" y="46" width="3.2" height="2.4" fill="#d2d2da"/><path d="M525.4 48.2l1.6-1.4" stroke="#4f86dc" stroke-width="1"/><path d="M531.8 41.2l.6 1.5 1.5.6-1.5.6-.6 1.5-.6-1.5-1.5-.6 1.5-.6z" fill="#f6b62c"/>
<path d="M525.2 55.6l2 1.4" stroke="#ccc" stroke-width=".6"/><path d="M528 57.4a2.2 2.2 0 1 0 3.6-.6l-1 1.6-1.4-.2z" fill="#e6e6e6"/><path d="M531 57l1.8-2.2.9.7-1.7 2.3z" fill="#e07a2a"/>
<g><rect x="596" y="27.8" width="9.6" height="14.6" fill="#f2f4f8" stroke="#b4b8c4" stroke-width=".4"/><rect x="597.2" y="29" width="5.6" height="5" fill="#2f6fd0"/><path d="M597.4 36.4h6.6M597.4 38.4h5M597.4 40.4h6" stroke="#5c7cb0" stroke-width=".6"/><path d="M597 37.6l1.6-1v2z" fill="#3a6cc0"/><path d="M603 39.8l4.6-3.4 2.4 2.8-4.2 3.4z" fill="#c8661e"/><path d="M607.6 36.4l2.4-1.8.8 1-1.6 2.2z" fill="#e8d8c0"/></g>
<g transform="translate(625 32.2)"><path d="M0 0L0-3.7A3.7 3.7 0 0 1 3.2-1.85z" fill="#f2d21e"/><path d="M0 0L3.2-1.85A3.7 3.7 0 0 1 3.2 1.85z" fill="#5ac83c"/><path d="M0 0L3.2 1.85A3.7 3.7 0 0 1 0 3.7z" fill="#2a9ad8"/><path d="M0 0L0 3.7A3.7 3.7 0 0 1-3.2 1.85z" fill="#3a4ad0"/><path d="M0 0L-3.2 1.85A3.7 3.7 0 0 1-3.2-1.85z" fill="#c23ac0"/><path d="M0 0L-3.2-1.85A3.7 3.7 0 0 1 0-3.7z" fill="#e8402a"/><circle r="1.2" fill="#fff" opacity=".75"/></g>
<path d="M621 41h8.2" stroke="#cfcfcf" stroke-width=".7"/><path d="M621 43.2h8.2" stroke="#d4d4d4" stroke-width="1.1"/><path d="M621 45.6h8.2" stroke="#d8d8d8" stroke-width="1.5"/><path d="M621 48.2h8.2" stroke="#dcdcdc" stroke-width="1.8"/>
<path d="M621 55h8.2" stroke="#bdbdbd" stroke-width=".7" stroke-dasharray="1.4 .7"/><path d="M621 57.6h8.2" stroke="#bdbdbd" stroke-width=".7" stroke-dasharray="2.4 .8 .6 .8"/><path d="M621 60.2h8.2" stroke="#bdbdbd" stroke-width=".7" stroke-dasharray=".8 .8"/>
<path d="M722 70.4l2.6 2.6M724.8 70.8v2.4h-2.4" stroke="#c8c8c8" stroke-width=".6" fill="none"/>
<g><rect x="731" y="28" width="10.6" height="14.4" fill="none" stroke="#bdbdbd" stroke-width=".5" stroke-dasharray="1 .7"/><rect x="732.4" y="29.6" width="5.6" height="5" fill="#ecd86a"/><circle cx="735.2" cy="39.4" r="2.6" fill="#eef2f6" stroke="#b8c0c8" stroke-width=".4"/><path d="M741.4 26.4l.9 4.4 3.6-2.8-2.4 3.8 4.4.4-4.2 1.4 2.8 3.2-3.8-1.8-.4 4.4-1.4-4.2-3.2 2.8 1.8-3.8-4.4-.4 4.2-1.400-2.800-3.200 3.800 1.800z" fill="#d8ecff"/><circle cx="741.6" cy="32.4" r="1.8" fill="#fff"/></g>
<rect x="754.4" y="29.6" width="3.4" height="2.4" fill="#ecd86a"/><path d="M756.6 33.2l3.400-4 .9.800-3.400 4z" fill="#e8c84a"/><path d="M754.200 34.400l1.600 1.600 1.600-1.600z" fill="#ddd"/>
<rect x="753.600" y="41.400" width="6.600" height="7" fill="none" stroke="#b0b0b0" stroke-width=".5"/><rect x="754.600" y="42.600" width="2" height="1.800" fill="#ddd"/><rect x="754.600" y="45.600" width="2" height="1.800" fill="#4f86dc"/><path d="M758 43.500h2M759 42.500v2M758 46.500h2" stroke="#ddd" stroke-width=".5"/>
<rect x="754" y="55" width="2.400" height="2" fill="#ecd86a"/><rect x="754" y="58.600" width="2.400" height="2" fill="#ecd86a"/><path d="M757.600 56.400l2.600 3.600-1.200.8z" fill="#f4f4f4"/>
<path d="M776 31.800v5.600M791.600 31.800v5.600" stroke="#dcdcdc" stroke-width=".7"/><path d="M776.600 34.600h14.400" stroke="#e4e4e4" stroke-width=".7"/><path d="M776.300 34.600l1.800-1.100v2.200zM791.300 34.600l-1.800-1.100v2.200z" fill="#e4e4e4"/><rect x="776" y="38.400" width="15.600" height="2.800" fill="#e8b824" stroke="#f4d45a" stroke-width=".4"/>
<path d="M806.600 28.600v6M803.600 31.600h6" stroke="#d8d8d8" stroke-width=".6"/><circle cx="806.600" cy="31.600" r="1.300" fill="none" stroke="#d8d8d8" stroke-width=".5"/><rect x="808.200" y="32.600" width="3.200" height="3.400" fill="#c8c8c8"/><path d="M810.200 28.600l1.200.2-1 2.400z" fill="#f6a020"/>
<path d="M808.200 41.200v7.400M804.500 44.900h7.400" stroke="#bdbdbd" stroke-width=".6"/><circle cx="808.200" cy="44.900" r="1" fill="#ddd"/>
<rect x="806" y="54.600" width="4.800" height="6" fill="#d4d4d4"/><rect x="806.700" y="55.300" width="3.400" height="1.400" fill="#4a4a4a"/><path d="M806.800 58h3.200M806.800 59.400h3.200" stroke="#666" stroke-width=".5" stroke-dasharray=".8 .4"/>
<g><rect x="824.600" y="28.600" width="10.400" height="13.400" rx="1" fill="#b8a898" stroke="#e0d8d0" stroke-width=".5"/><rect x="827.600" y="27.200" width="4.400" height="2.600" rx=".8" fill="#dcdcdc"/><path d="M829 32.600h6.400l2 2v8.600h-8.400z" fill="#f8f8f8" stroke="#b4b4b4" stroke-width=".4"/><path d="M835.400 32.600v2h2z" fill="#d0d0d0"/></g>
<path d="M848.600 29.800l5.200 5.200M853.800 29.800l-5.200 5.200" stroke="#c8c8c8" stroke-width=".8"/><path d="M848 29.400l1.400 1M854.400 29.400l-1.400 1" stroke="#e8e8e8" stroke-width="1"/>
<rect x="848" y="41.800" width="4.200" height="5.400" fill="#dcdcdc"/><rect x="850.200" y="43.400" width="4.200" height="5.400" fill="#f4f4f4" stroke="#a8a8a8" stroke-width=".3"/>
<path d="M868.600 31.400h5.800v3h7.600v6.600h-13.400z" fill="url(#gw)" stroke="#fff" stroke-width=".4"/>
<text x="0" y="0" transform="translate(9.1 15.7) scale(.9 1)" text-anchor="middle" font-size="19.5" font-weight="bold" letter-spacing="0" fill="#cf2326" stroke="#e0504c" stroke-width=".3">A</text>
<path d="M16.6 9.6h3.4l-1.7 1.9z" fill="#26262e"/>
<path d="M27 4.200h5.600l2.600 1.600v3.900h-8.200z" fill="#f4f4f4"/><path d="M32.600 4.200v1.600h2.600z" fill="#c8c8c8"/>
<path d="M39.800 4.400h2.800l.8.900h3v3.600h-6.600z" fill="#c9ccd2"/><path d="M40 8.900l1.600-3h6l-1.600 3z" fill="#eef0f4"/>
<rect x="53.300" y="2.900" width="6.500" height="6.500" rx=".5" fill="#5d6c84"/><rect x="54.600" y="2.900" width="3.900" height="2.400" fill="#eef2f8"/><rect x="54.600" y="6.600" width="3.900" height="2.800" fill="#dde3ec"/>
<rect x="65.800" y="3.200" width="6" height="6.200" rx=".5" fill="#5d6c84"/><rect x="66.900" y="3.200" width="3.600" height="2.200" fill="#eef2f8"/><rect x="66.900" y="6.800" width="3.600" height="2.600" fill="#dde3ec"/><path d="M69.600 6.400l3.400-3.800 1 .9-3.400 3.800z" fill="#f0b030"/>
<rect x="79.600" y="3" width="5" height="2.400" fill="#f4f4f4"/><rect x="78.200" y="5" width="7.800" height="3.600" rx=".8" fill="#d4d8de"/><rect x="79.800" y="7.400" width="4.600" height="2.400" fill="#f8f8f8" stroke="#9aa" stroke-width=".3"/>
<path d="M91.600 6l3.200-2.400v1.500c2.400 0 3.600 1.200 3.600 3.800-.8-1.400-1.800-1.800-3.600-1.800v1.400z" fill="#e4e4e4"/>
<path d="M103 5.600h2.600l-1.300 1.500z" fill="#9a9a9a"/>
<path d="M117.400 6l-3.200-2.400v1.500c-2.400 0-3.600 1.200-3.600 3.800.8-1.400 1.800-1.800 3.600-1.800v1.400z" fill="#6c6c6c"/>
<path d="M122 5.600h2.600l-1.300 1.500z" fill="#7a7a7a"/>
<path d="M129 4.400h3.600" stroke="#e4e4e4" stroke-width=".8"/><path d="M128.800 6h4l-2 2.200z" fill="#e4e4e4"/>
<rect x="413.200" y="16.200" width="7.400" height="4.400" rx="1" fill="#f0f0f0"/><rect x="415.400" y="17.600" width="3" height="1.600" fill="#3c3c3c"/><path d="M422.600 17.600h3l-1.500 1.800z" fill="#f0f0f0"/>
<path d="M723.600 4.600l2 1.600-2 1.600z" fill="#d8d8d8"/>
<path d="M827.600 4h1.600v1.400h1.200V4h1.600l.6 5h-2.200V7h-1.200v2h-2.200z" fill="#f0f0f0"/>
<circle cx="843" cy="4.600" r="2" fill="#3a76e8"/><path d="M839.400 10.400c0-2.600 1.600-3.600 3.600-3.600s3.600 1 3.600 3.600z" fill="#3a76e8"/>
<path d="M895.600 5.800h2.400l-1.200 1.400z" fill="#d4d4d4"/>
<path d="M903.600 3.400h1.600l1 4.400h4.200l.8-3.200h-5.600" stroke="#8fb4ea" stroke-width=".9" fill="none"/><circle cx="906.800" cy="9.200" r=".8" fill="#8fb4ea"/><circle cx="910" cy="9.200" r=".8" fill="#8fb4ea"/>
<path d="M920.600 3l3.600 6h-7.200z" fill="none" stroke="#b8cdf0" stroke-width="1"/><circle cx="920.600" cy="3.400" r="1" fill="#dce6f8"/><circle cx="917.400" cy="8.800" r="1" fill="#dce6f8"/><circle cx="923.800" cy="8.800" r="1" fill="#dce6f8"/>
<path d="M928.200 5.800h2.400l-1.200 1.400z" fill="#d4d4d4"/>
<path d="M935.800 2v8.600" stroke="#6a6a6a" stroke-width=".5"/>
<circle cx="945.250" cy="6.200" r="3.500" fill="#2f62d0" stroke="#e8eefc" stroke-width=".8"/><text x="945.250" y="8.500" text-anchor="middle" font-size="6" font-weight="bold" letter-spacing="0" fill="#fff">?</text>
<path d="M953.500 5.800h2.400l-1.200 1.400z" fill="#d4d4d4"/>
<rect x="972" y="5.200" width="5.600" height="1.800" fill="#f8f8f8" stroke="#5a6470" stroke-width=".4"/>
<rect x="988.600" y="2.400" width="4.200" height="3.800" fill="none" stroke="#f8f8f8" stroke-width="1"/><rect x="986.800" y="3.800" width="4.200" height="3.800" fill="#b9c7d8" stroke="#f8f8f8" stroke-width="1"/>
<path d="M1006.200 2.600l4.800 4.200M1011 2.600l-4.800 4.200" stroke="#fff" stroke-width="1.500"/>
<path d="M992 101.600h4.700" stroke="#f0f0f0" stroke-width="1.300"/>
<rect x="1003.600" y="98" width="3.400" height="3.200" fill="none" stroke="#f0f0f0" stroke-width=".8"/><rect x="1002.200" y="99.400" width="3.400" height="3.200" fill="#212830" stroke="#f0f0f0" stroke-width=".8"/>
<path d="M1012.800 98.200l4.400 4.400M1017.200 98.200l-4.400 4.400" stroke="#f0f0f0" stroke-width="1.200"/>
<circle cx="979.600" cy="148.700" r="28.200" fill="none" stroke="#4b5059" stroke-width="7.600" opacity=".95"/>
<rect x="965.800" y="135.100" width="27.400" height="27.400" fill="#c3c4c8"/><rect x="971" y="140.400" width="17" height="16.800" fill="#b7bdc8"/>
<text x="979.800" y="151" text-anchor="middle" font-size="6.200" letter-spacing="-.2" fill="#3c4048">TOP</text>
<text x="979.6" y="123.3" text-anchor="middle" font-size="11.200" font-weight="bold" letter-spacing="0" fill="#d9d9db">N</text>
<text x="979.6" y="183.6" text-anchor="middle" font-size="11.200" font-weight="bold" letter-spacing="0" fill="#d9d9db">S</text>
<text x="950" y="152.7" text-anchor="middle" font-size="11.200" font-weight="bold" letter-spacing="0" fill="#d9d9db">W</text>
<text x="1010" y="152.7" text-anchor="middle" font-size="11.200" font-weight="bold" letter-spacing="0" fill="#d9d9db">E</text>
<rect x="967.100" y="195.600" width="24.800" height="8.900" rx="2" fill="#b9b9c6" stroke="#8e8e9c" stroke-width=".5"/><text x="969.800" y="202.400" font-size="6" letter-spacing="-.2" fill="#787884">WCS</text><path d="M985.800 199.200h3l-1.500 1.800z" fill="#c9c9d4"/>
<rect x="1004.800" y="218.100" width="17.400" height="112.200" rx="2" fill="#4b5059"/>
<g fill="none" stroke="#5e636c" stroke-width=".9"><circle cx="1020" cy="220.600" r="1.200" stroke-width=".5"/><circle cx="1020" cy="327.800" r="1.200" stroke-width=".5"/><circle cx="1013.200" cy="234.300" r="5.400"/><circle cx="1013.200" cy="234.300" r="3"/><path d="M1009.400 259.400c-1.400-2-2-3.600-1-4s1.600.8 2.200 1.600v-5.200c0-1.200 1.400-1.200 1.400 0v-1.200c0-1.200 1.500-1.200 1.500 0v.8c0-1.200 1.500-1.200 1.500 0v1c0-1 1.400-1 1.400.2v4.400c0 2-.8 3.400-2 4.200h-3.400z"/><path d="M1008.200 265.600l8.600 9M1016.800 265.600l-8.600 9"/><circle cx="1016.600" cy="274.600" r="1.800" fill="#4b5059"/><path d="M1018 276l1.400 1.400"/><ellipse cx="1013.400" cy="293" rx="5.200" ry="2"/><ellipse cx="1013.400" cy="292.600" rx="1.800" ry="5.400"/><rect x="1008" y="309" width="2.800" height="2.400"/><rect x="1011.800" y="309" width="2.800" height="2.400"/><rect x="1015.600" y="309" width="2.800" height="2.400"/><rect x="1008" y="312.800" width="10.400" height="6.400"/></g>
<path d="M1012 317.400v-3l2.600 1.500z" fill="#5e636c"/>
<path d="M1012.100 244.4h2.400l-1.200 1.500z" fill="#3a3f48"/>
<path d="M1012.100 281.09999999999997h2.400l-1.200 1.500z" fill="#3a3f48"/>
<path d="M1012.100 301.9h2.400l-1.200 1.500z" fill="#3a3f48"/>
<g stroke="#d8d8d8" stroke-width=".9" fill="none"><path d="M11.700 521.600V548.200H38.300"/><rect x="9" y="545.500" width="5.400" height="5.400"/><path d="M12.600 512.400l3 3.600l3-3.600M15.600 516v3.600"/><path d="M40.600 541.200l6.800 6.800M47.400 541.200l-6.800 6.800"/></g>
<path d="M0 485.800H311M611.300 485.800H1024" stroke="#6a3034" stroke-width=".8"/>
<g fill="#8a8a8a"><rect x="250.600" y="548" width="1" height="1"/><rect x="252.200" y="548" width="1" height="1"/><rect x="250.600" y="550" width="1" height="1"/><rect x="252.200" y="550" width="1" height="1"/><rect x="250.600" y="552" width="1" height="1"/><rect x="252.200" y="552" width="1" height="1"/><rect x="250.600" y="554" width="1" height="1"/><rect x="252.200" y="554" width="1" height="1"/><rect x="250.600" y="556" width="1" height="1"/><rect x="252.200" y="556" width="1" height="1"/></g>
<path d="M256.800 550.400l4.400 4.600M261.200 550.400l-4.400 4.600" stroke="#f0f0f0" stroke-width="1.200"/>
<path d="M268.200 550.200a2 2 0 0 1 2.800 2.400l3.200 3.400-1 1-3.400-3.200a2 2 0 0 1-2.400-2.800l1.400 1.400 1-.9z" fill="#ececec"/>
<rect x="280" y="549" width="7.600" height="7" rx=".8" fill="#a9b2c2" stroke="#8892a4" stroke-width=".4"/><path d="M281.600 550.800l1.800 1.500-1.800 1.500M284 554.600h2.200" stroke="#2c3240" stroke-width=".7" fill="none"/>
<path d="M290 552h2.600l-1.300 1.600z" fill="#555"/>
<path d="M769.600 553.600h3l-1.500-1.900z" fill="#2c2c2c"/>
<defs><linearGradient id="gtab" x1="0" y1="0" x2="0" y2="1"><stop offset="0" stop-color="#4a4a4a"/><stop offset=".7" stop-color="#5e5e5e"/><stop offset="1" stop-color="#6a6a6a"/></linearGradient><linearGradient id="gtabA" x1="0" y1="0" x2="0" y2="1"><stop offset="0" stop-color="#5e5e5e"/><stop offset=".6" stop-color="#808080"/><stop offset="1" stop-color="#8e8e8e"/></linearGradient></defs>
<path d="M4 560c1.500 0 2 .8 2.600 2.400l1.600 5c.5 1.600 1.300 2.200 2.800 2.200h23.0c1.500 0 2.300-.6 2.800-2.200l1.600-5c.6-1.600 1.100-2.400 2.600-2.400z" fill="url(#gtabA)"/>
<path d="M36.5 560c1.500 0 2 .8 2.600 2.400l1.600 5c.5 1.600 1.300 2.200 2.800 2.200h24.5c1.500 0 2.300-.6 2.800-2.200l1.600-5c.6-1.600 1.100-2.400 2.600-2.400z" fill="url(#gtab)"/>
<path d="M70.5 560c1.500 0 2 .8 2.600 2.400l1.600 5c.5 1.600 1.300 2.200 2.800 2.200h24.5c1.500 0 2.300-.6 2.800-2.200l1.600-5c.6-1.600 1.100-2.400 2.600-2.400z" fill="url(#gtab)"/>
<path d="M109.500 560.600h10l-1.600 7.400c-.3 1-.8 1.400-1.800 1.400h-7.400c-1 0-1.500-.6-1.200-1.600z" fill="#4e4e4e"/>
<text x="12.400" y="567.200" font-size="6.600" font-weight="bold" letter-spacing="-.25" fill="#fff">Model</text>
<text x="43.400" y="567.200" font-size="6.600" letter-spacing="-.2" fill="#d6d6d6">Layout1</text>
<text x="77.800" y="567.200" font-size="6.600" letter-spacing="-.2" fill="#d6d6d6">Layout2</text>
<path d="M112.400 564.800h4.400m-2.200-2.200v4.400" stroke="#f0f0f0" stroke-width="1"/>
<text x="688.400" y="569.400" font-size="6.300" letter-spacing="-.25" fill="#f4f4f4">MODEL</text>
<path d="M712.5 561.500v12" stroke="#3a3a3a" stroke-width=".7"/><path d="M713.2 561.500v12" stroke="#626262" stroke-width=".4"/>
<path d="M747.3 561.500v12" stroke="#3a3a3a" stroke-width=".7"/><path d="M748.0 561.500v12" stroke="#626262" stroke-width=".4"/>
<path d="M803.4 561.500v12" stroke="#3a3a3a" stroke-width=".7"/><path d="M804.1 561.500v12" stroke="#626262" stroke-width=".4"/>
<path d="M838.3 561.500v12" stroke="#3a3a3a" stroke-width=".7"/><path d="M839.0 561.500v12" stroke="#626262" stroke-width=".4"/>
<path d="M859.3 561.500v12" stroke="#3a3a3a" stroke-width=".7"/><path d="M860.0 561.500v12" stroke="#626262" stroke-width=".4"/>
<path d="M918.2 561.500v12" stroke="#3a3a3a" stroke-width=".7"/><path d="M918.9000000000001 561.500v12" stroke="#626262" stroke-width=".4"/>
<path d="M940.2 561.500v12" stroke="#3a3a3a" stroke-width=".7"/><path d="M940.9000000000001 561.500v12" stroke="#626262" stroke-width=".4"/>
<path d="M954.3 561.500v12" stroke="#3a3a3a" stroke-width=".7"/><path d="M955.0 561.500v12" stroke="#626262" stroke-width=".4"/>
<path d="M968.4 561.500v12" stroke="#3a3a3a" stroke-width=".7"/><path d="M969.1 561.500v12" stroke="#626262" stroke-width=".4"/>
<path d="M983.2 561.500v12" stroke="#3a3a3a" stroke-width=".7"/><path d="M983.9000000000001 561.500v12" stroke="#626262" stroke-width=".4"/>
<path d="M997.2 561.500v12" stroke="#3a3a3a" stroke-width=".7"/><path d="M997.9000000000001 561.500v12" stroke="#626262" stroke-width=".4"/>
<path d="M740.8 566.5h3l-1.500 1.800z" fill="#e8e8e8"/>
<path d="M775.8 566.5h3l-1.500 1.800z" fill="#e8e8e8"/>
<path d="M796.9 566.5h3l-1.500 1.800z" fill="#e8e8e8"/>
<path d="M831.7 566.5h3l-1.500 1.800z" fill="#e8e8e8"/>
<path d="M852.7 566.5h3l-1.500 1.800z" fill="#e8e8e8"/>
<path d="M912.7 566.5h3l-1.500 1.800z" fill="#e8e8e8"/>
<path d="M934.7 566.5h3l-1.500 1.800z" fill="#e8e8e8"/>
<rect x="715.400" y="562.800" width="8.600" height="8.600" fill="#2f7be8"/><path d="M718.300 562.800v8.600M721.200 562.800v8.600M715.400 565.700h8.600M715.400 568.600h8.600" stroke="#1d4fa8" stroke-width=".5"/>
<g fill="#8a8a8a"><rect x="727.6" y="563.0" width="1" height="1"/><rect x="727.6" y="565.3" width="1" height="1"/><rect x="727.6" y="567.6" width="1" height="1"/><rect x="727.6" y="569.9" width="1" height="1"/><rect x="729.9" y="563.0" width="1" height="1"/><rect x="729.9" y="565.3" width="1" height="1"/><rect x="729.9" y="567.6" width="1" height="1"/><rect x="729.9" y="569.9" width="1" height="1"/><rect x="732.2" y="563.0" width="1" height="1"/><rect x="732.2" y="565.3" width="1" height="1"/><rect x="732.2" y="567.6" width="1" height="1"/><rect x="732.2" y="569.9" width="1" height="1"/><rect x="734.5" y="563.0" width="1" height="1"/><rect x="734.5" y="565.3" width="1" height="1"/><rect x="734.5" y="567.6" width="1" height="1"/><rect x="734.5" y="569.9" width="1" height="1"/></g>
<path d="M752 563v8.200h7" stroke="#d4d4d4" stroke-width=".9" fill="none"/><path d="M754.400 568.600h2.400v2.600" stroke="#a8a8a8" stroke-width=".5" fill="none"/>
<circle cx="767.600" cy="567.200" r="3.900" fill="none" stroke="#2f7be8" stroke-width="1.300"/><path d="M767.600 567.200h4M767.600 567.200v-3" stroke="#2f7be8" stroke-width=".9"/>
<path d="M785 563l7.600 8.600M789 562.600v9.400M792 563.600l-7 7" stroke="#9a9a9a" stroke-width=".8"/>
<path d="M805.600 571.200h9.800M806 571l7.600-6.200" stroke="#2f7be8" stroke-width="1.200" fill="none"/><path d="M809.800 571a4 4 0 0 0-1-2.800" stroke="#2f7be8" stroke-width=".7" fill="none"/>
<rect x="819.600" y="564" width="7.400" height="7" fill="none" stroke="#2f7be8" stroke-width="1.300"/><rect x="818.600" y="562.600" width="2.400" height="2.400" fill="#2cae4a"/>
<path d="M841.400 565.600l3.600-1.800 3.600 1.800v4l-3.600 1.800-3.600-1.800zM841.400 565.600l3.600 1.800 3.600-1.800M845 567.400v4" stroke="#d8d8d8" stroke-width=".7" fill="none"/><rect x="840.200" y="563.200" width="2.200" height="2.200" fill="#2cae4a"/>
<path d="M866.4 562.800l1.300 5 3.600 3.200-.9 1-4-2.800-4 2.800-.9-1 3.600-3.200z" fill="#2f7be8"/><path d="M868.200 563.400c1.600-.4 2.600 1 1.600 2.200" stroke="#2f7be8" stroke-width=".7" fill="none"/>
<path d="M879.4 562.800l1.300 5 3.600 3.200-.9 1-4-2.800-4 2.800-.9-1 3.600-3.200z" fill="#d8d8d8"/><path d="M881.600 563.200l.5 1.100 1.100.5-1.100.5-.5 1.100-.5-1.100-1.100-.5 1.100-.5z" fill="#e8e8e8"/>
<path d="M891.6 562.800l1.300 5 3.600 3.200-.9 1-4-2.800-4 2.800-.9-1 3.600-3.200z" fill="#d8d8d8"/>
<text x="900.200" y="569.600" font-size="6.300" letter-spacing="-.3" fill="#f0f0f0">1:1</text>
<circle cx="926" cy="567.300" r="2.600" fill="none" stroke="#d8d8d8" stroke-width="1.500"/><path d="M926 563.200v8.200M921.900 567.300h8.200M923.100 564.400l5.800 5.800M928.900 564.400l-5.800 5.800" stroke="#d8d8d8" stroke-width="1"/><circle cx="926" cy="567.300" r="1.100" fill="#4c4c4c"/>
<path d="M943.200 567.300h8.200M947.300 563.200v8.200" stroke="#e8e8e8" stroke-width="1"/>
<rect x="956.800" y="563.200" width="3.400" height="3" fill="none" stroke="#c8c8c8" stroke-width=".7"/><path d="M960.200 564.700h2" stroke="#c8c8c8" stroke-width=".6"/><circle cx="963.600" cy="566" r="1.500" fill="none" stroke="#c8c8c8" stroke-width=".7"/><path d="M958.400 571.400l1.600-2.800 1.600 2.800z" fill="none" stroke="#c8c8c8" stroke-width=".6"/>
<circle cx="976" cy="567.300" r="4.600" fill="#2f7be8" stroke="#1a4fa8" stroke-width=".6"/><path d="M973.600 568.600a2.800 2.800 0 0 0 4.800-.8l.8-2" stroke="#1a3f8a" stroke-width=".7" fill="none"/>
<rect x="985.800" y="563.600" width="4" height="3.200" fill="#f0d048"/><rect x="988" y="566.400" width="5" height="3.600" fill="#5c9ae8"/><path d="M989.600 570.400l1.600 1.400 2.800-3" stroke="#5ac83c" stroke-width="1" fill="none"/>
<rect x="999.400" y="563.400" width="9" height="7.600" fill="none" stroke="#e4e4e4" stroke-width=".9"/><path d="M1003.400 565.200h3.200v3.200M1001.200 569.400l2-2" stroke="#e4e4e4" stroke-width=".8" fill="none"/><rect x="1000.600" y="567.600" width="2.400" height="2.200" fill="#e4e4e4"/>
<path d="M1012.400 564.400h8.400M1012.400 567.300h8.400M1012.400 570.200h8.400" stroke="#e8e8e8" stroke-width="1.300"/>

</svg>
</div>
</body>
</html>
